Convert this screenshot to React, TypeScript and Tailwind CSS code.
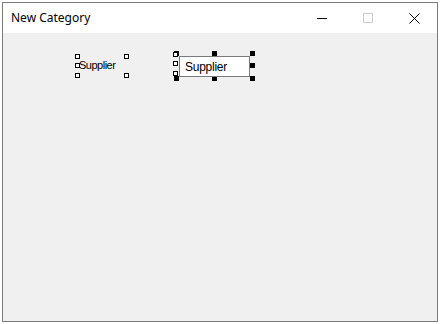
import React from 'react';

const uiFont = { fontFamily: '"Segoe UI", "Noto Sans", "Liberation Sans", sans-serif' };
const formFont = { fontFamily: '"Liberation Sans", Arial, sans-serif' };

// grab handles in the designer, page coords minus canvas origin (3, 33)
const hollowHandles = [
  [72, 21],
  [121, 21],
  [72, 30],
  [72, 40],
  [121, 40],
];

const solidHandles = [
  [171, 18],
  [209, 18],
  [247, 18],
  [247, 30],
  [171, 43],
  [209, 43],
  [247, 43],
];

const boxHollowHandles = [
  [170, 19],
  [170, 28],
  [170, 38],
];

function Handle({ x, y, solid }: { x: number; y: number; solid?: boolean }) {
  return (
    <div
      className={`absolute w-[5px] h-[5px] border border-black ${solid ? 'bg-black' : 'bg-white'}`}
      style={{ left: x, top: y }}
    />
  );
}

export default function App() {
  return (
    <div className="w-[440px] h-[324px] bg-white p-[2px]">
      <div className="w-[436px] h-[320px] border border-[#7a7a7a] flex flex-col">
        {/* title bar */}
        <div className="h-[30px] bg-white flex items-center shrink-0">
          <div className="pl-[8px] text-[12px] text-black flex-1" style={uiFont}>
            New Category
          </div>
          <div className="w-[46px] h-full flex items-center justify-center">
            <svg width="10" height="10" viewBox="0 0 10 10">
              <line x1="0" y1="5.5" x2="11" y2="5.5" stroke="#000" strokeWidth="1" />
            </svg>
          </div>
          <div className="w-[46px] h-full flex items-center justify-center">
            <svg width="10" height="10" viewBox="0 0 10 10">
              <rect x="0.5" y="0.5" width="9" height="9" fill="none" stroke="#cccccc" strokeWidth="1" />
            </svg>
          </div>
          <div className="w-[46px] h-full flex items-center justify-center">
            <svg width="11" height="11" viewBox="0 0 11 11">
              <line x1="0.5" y1="0.5" x2="10.5" y2="10.5" stroke="#000" strokeWidth="1" />
              <line x1="10.5" y1="0.5" x2="0.5" y2="10.5" stroke="#000" strokeWidth="1" />
            </svg>
          </div>
        </div>

        {/* designer canvas */}
        <div className="relative flex-1 bg-[#f0f0f0]">
          <div
            className="absolute left-[76px] top-[26px] text-[11px] leading-[13px] tracking-[-0.5px] text-black"
            style={formFont}
          >
            Supplier
          </div>
          {hollowHandles.map(([x, y], i) => (
            <Handle key={`h${i}`} x={x} y={y} />
          ))}

          {solidHandles.map(([x, y], i) => (
            <Handle key={`s${i}`} x={x} y={y} solid />
          ))}
          <div className="absolute left-[176px] top-[23px] w-[71px] h-[21px] bg-white border border-[#7a7a7a] flex items-center pl-[5px]">
            <span className="text-[12px] tracking-[-0.25px] text-black" style={formFont}>
              Supplier
            </span>
          </div>
          {boxHollowHandles.map(([x, y], i) => (
            <Handle key={`b${i}`} x={x} y={y} />
          ))}
        </div>
      </div>
    </div>
  );
}
